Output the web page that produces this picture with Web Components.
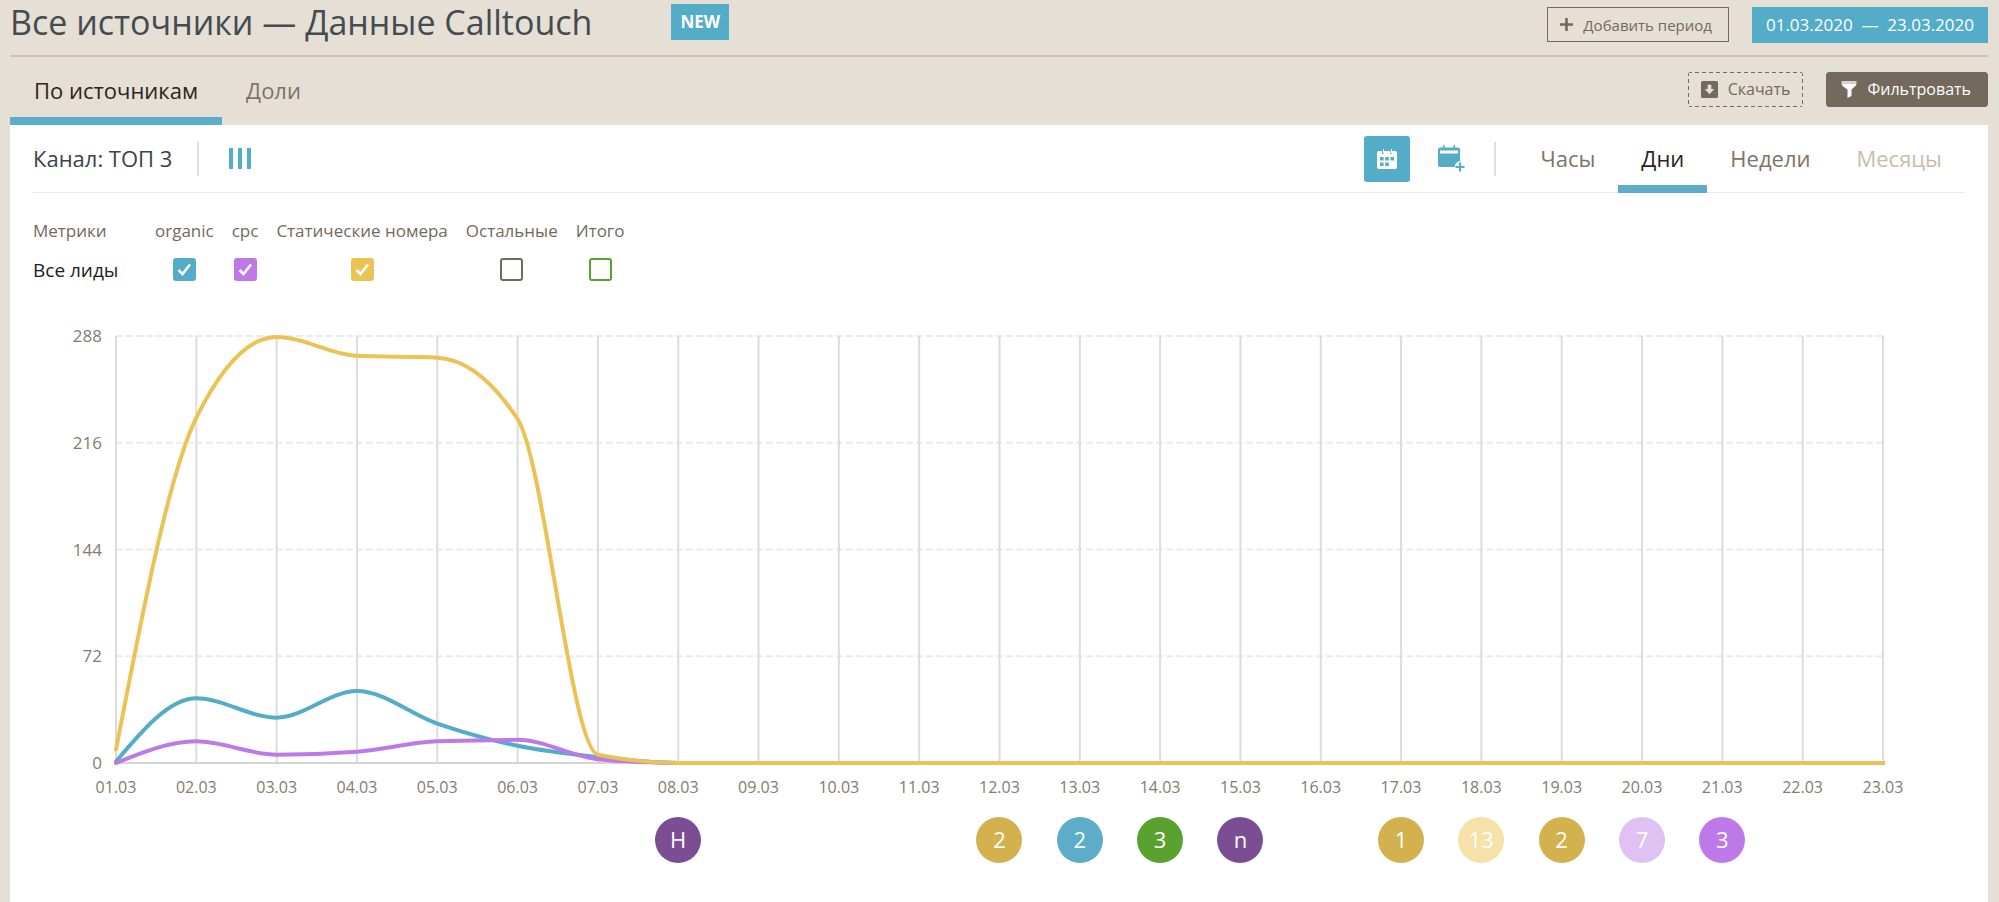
<!DOCTYPE html>
<html lang="ru">
<head>
<meta charset="utf-8">
<title>Все источники — Данные Calltouch</title>
<style>
html { background: #e6dfd6; }
body { margin: 0; min-height: 100vh; display: flex; font-family: "Open Sans", "Noto Sans", sans-serif; color: #3c4346; }
report-page { flex: 1; min-width: 0; }
</style>
</head>
<body>
<report-page></report-page>

<template id="t-page">
<style>
:host { display: flex; flex-direction: column; padding: 0 11px 0 10px; box-sizing: border-box; }
.panel { flex: 1; background: #fff; }
.group { display: flex; align-items: center; gap: 23px; }
.actions { margin-bottom: 4px; }
</style>
<report-header></report-header>
<tab-bar>
  <tab-link active>По источникам</tab-link>
  <tab-link>Доли</tab-link>
  <div class="group actions" slot="actions">
    <tool-button kind="dashed">
      <svg slot="icon" width="17" height="17" viewBox="0 0 16 16"><rect width="16" height="16" rx="1.500" fill="#73695c"/><path d="M6.300 3.500h3.400v4h2.800L8 12.500 3.500 7.500h2.800z" fill="#e6dfd6"/></svg>
      Скачать
    </tool-button>
    <tool-button kind="solid">
      <svg slot="icon" width="16" height="18" viewBox="0 0 16 18"><path d="M.5 1h15v2.500H.5z" fill="#d8d3cc"/><path d="M.5 3.500h15c0 2.300-2.600 4-5 6v6.500L6.500 18V9.500c-3-2-6-3.700-6-6z" fill="#fff"/></svg>
      Фильтровать
    </tool-button>
  </div>
</tab-bar>
<main class="panel">
  <chart-toolbar></chart-toolbar>
  <metric-table></metric-table>
  <line-chart></line-chart>
</main>
</template>

<template id="t-header">
<style>
:host { display: flex; justify-content: space-between; height: 55px; border-bottom: 2px solid #cdc3b3; }
.left { display: flex; align-items: center; gap: 79px; height: 44px; }
h1 { margin: 0; font-size: 34px; line-height: 44px; font-weight: 400; color: #454c4f; white-space: nowrap; }
.badge { background: #53adc9; color: #fff; font-size: 17px; font-weight: 700; line-height: 36px; padding: 0 9px; }
.right { display: flex; gap: 23px; align-items: flex-start; padding-top: 7px; }
</style>
<div class="left"><h1>Все источники — Данные Calltouch</h1><span class="badge">NEW</span></div>
<div class="right">
  <tool-button kind="outline">
    <svg slot="icon" width="13" height="13" viewBox="0 0 13 13"><path d="M6.500 0v13M0 6.500h13" stroke="#73695c" stroke-width="2.600"/></svg>
    Добавить период
  </tool-button>
  <tool-button kind="date">01.03.2020&nbsp; —&nbsp; 23.03.2020</tool-button>
</div>
</template>

<template id="t-button">
<style>
:host { display: block; }
button { display: flex; align-items: center; gap: 10px; height: 35px; padding: 0 12px; box-sizing: border-box; border: 1px solid #73695c; background: none; color: #73695c; font-family: inherit; font-size: 16px; line-height: 24px; white-space: nowrap; cursor: pointer; }
:host([kind=outline]) button { font-size: 15px; padding: 0 16px 0 12px; }
:host([kind=date]) button { height: 36px; border: 0; padding: 0 14px; background: #53adc9; color: #fff; font-size: 17px; }
:host([kind=dashed]) button {
  --h: repeating-linear-gradient(90deg, #73695c 0 4px, transparent 4px 7px);
  --v: repeating-linear-gradient(#73695c 0 4px, transparent 4px 7px);
  border: 0; border-radius: 3px; padding: 0 13px;
  background: var(--h) top / 100% 1px no-repeat, var(--h) bottom / 100% 1px no-repeat, var(--v) left / 1px 100% no-repeat, var(--v) right / 1px 100% no-repeat;
}
:host([kind=solid]) button { background: #73695c; color: #fff; border-radius: 3px; padding: 0 16px 0 14px; }
</style>
<button type="button"><slot name="icon"></slot><span><slot></slot></span></button>
</template>

<template id="t-tabs">
<style>
:host { display: flex; justify-content: space-between; align-items: center; height: 68px; }
nav { display: flex; height: 100%; }
</style>
<nav><slot></slot></nav><slot name="actions"></slot>
</template>

<template id="t-tab">
<style>
:host { display: flex; --ink: #7d7368; }
:host([active]) { --ink: #2b2620; }
:host([disabled]) { --ink: #c9bda9; }
a { display: flex; align-items: center; padding: 5px var(--tab-pad, 24px) 0; border-bottom: 8px solid transparent; color: var(--ink); font-size: 22px; line-height: 30px; text-decoration: none; white-space: nowrap; }
:host([active]) a { border-color: #5cadca; }
</style>
<a href="#"><slot></slot></a>
</template>

<template id="t-toolbar">
<style>
:host { display: flex; justify-content: space-between; height: 67px; margin: 0 23px; border-bottom: 1px solid #ebebeb; }
.side { display: flex; align-items: center; }
h2 { margin: 0; padding-bottom: 2px; font-size: 22px; line-height: 30px; font-weight: 400; color: #3c4346; }
.rule { width: 2px; height: 34px; background: #e0e0e0; }
button { display: flex; align-items: center; justify-content: center; width: 46px; height: 46px; padding: 0; border: 0; border-radius: 3px; background: none; cursor: pointer; }
.on { background: #53adc9; }
.columns { width: 66px; }
.extra { margin: 0 20px 0 18px; }
nav { --tab-pad: 23px; display: flex; align-self: stretch; margin-left: 21px; margin-bottom: -1px; }
h2 + .rule { margin: 0 8px 0 25px; }
</style>
<div class="side">
  <h2>Канал: ТОП 3</h2><span class="rule"></span>
  <button class="columns" type="button" aria-label="Столбцы"><svg width="22" height="21" viewBox="0 0 22 21"><path d="M0 0h4v21H0zM9 0h4v21H9zM18 0h4v21h-4z" fill="#53adc9"/></svg></button>
</div>
<div class="side">
  <button class="on" type="button" aria-label="Календарь"><svg width="20" height="20" viewBox="0 0 20 20"><path d="M2 2h3v3h1.500V2h7v3H15V2h3a2 2 0 0 1 2 2v14a2 2 0 0 1-2 2H2a2 2 0 0 1-2-2V4a2 2 0 0 1 2-2z" fill="#fff"/><path d="M6 0h1v4H6zM14 0h1v4h-1z" fill="#fff"/><path d="M3 8h3.600v3.500H3zM8.200 8h3.600v3.500H8.200zM13.400 8H17v3.500h-3.600zM3 13.500h3.600V17H3zM8.200 13.500h3.600V17H8.200z" fill="#53adc9"/></svg></button>
  <button class="extra" type="button" aria-label="Добавить дату"><svg width="27" height="27" viewBox="0 0 27 27"><path d="M2 2.500h18a2 2 0 0 1 2 2v11.500c-3 .5-5 2.500-5.500 6H2a2 2 0 0 1-2-2v-15.500a2 2 0 0 1 2-2z" fill="#53adc9"/><path d="M5 0h1.500v4H5zM15.500 0H17v4h-1.500z" fill="#53adc9"/><path d="M2 5.500h18v3H2z" fill="#fff"/><path d="M22 17.500v9M17.500 22h9" stroke="#53adc9" stroke-width="2.200"/></svg></button>
  <span class="rule"></span>
  <nav><tab-link>Часы</tab-link><tab-link active>Дни</tab-link><tab-link>Недели</tab-link><tab-link disabled>Месяцы</tab-link></nav>
</div>
</template>

<template id="t-metrics">
<style>
:host { display: block; margin: 18px 23px 0; }
table { border-collapse: collapse; }
th, td { height: 39px; padding: 0 9px; font-weight: 400; font-size: 17px; line-height: 24px; text-align: center; white-space: nowrap; color: #73695c; }
tr > :first-child { width: 104px; padding-left: 0; text-align: left; }
tbody th { font-size: 19px; color: #1c2226; }
input { appearance: none; display: block; width: 23px; height: 23px; margin: 0 auto; border: 2px solid var(--c); border-radius: 3px; box-sizing: border-box; background: #fff center / 15px 15px no-repeat; }
input:checked { background-color: var(--c); background-image: url("data:image/svg+xml,%3Csvg xmlns='http://www.w3.org/2000/svg' viewBox='0 0 15 15'%3E%3Cpath d='M1.500 8l4 4L13 2.500' fill='none' stroke='white' stroke-width='2.600'/%3E%3C/svg%3E"); }
</style>
<table>
<thead><tr><th scope="col">Метрики</th><th scope="col" id="m1">organic</th><th scope="col" id="m2">cpc</th><th scope="col" id="m3">Статические номера</th><th scope="col" id="m4">Остальные</th><th scope="col" id="m5">Итого</th></tr></thead>
<tbody><tr><th scope="row">Все лиды</th>
<td><input type="checkbox" checked aria-labelledby="m1" style="--c:#53adc9"></td>
<td><input type="checkbox" checked aria-labelledby="m2" style="--c:#bd79e8"></td>
<td><input type="checkbox" checked aria-labelledby="m3" style="--c:#ebc354"></td>
<td><input type="checkbox" aria-labelledby="m4" style="--c:#73695c"></td>
<td><input type="checkbox" aria-labelledby="m5" style="--c:#5aa22f"></td></tr></tbody>
</table>
</template>

<template id="t-chart">
<style>
:host { display: grid; grid-template-columns: 92px 1fr; column-gap: 14px; margin: 47px 105px 0 0; color: #857b6f; font-size: 16px; line-height: 24px; }
.y, .x { display: flex; justify-content: space-between; margin: 0; padding: 0; list-style: none; }
.y { flex-direction: column; text-align: right; font-size: 17px; }
.y li { height: 0; display: flex; align-items: center; justify-content: flex-end; }
svg { display: block; width: 100%; height: 427px; overflow: visible; }
svg * { vector-effect: non-scaling-stroke; fill: none; }
.x { grid-column: 2; margin-top: 12px; }
.x li { width: 0; display: flex; flex-direction: column; align-items: center; gap: 18px; white-space: nowrap; }
</style>
<ul class="y"></ul>
<svg viewBox="0 0 22 288" preserveAspectRatio="none" role="img" aria-label="График лидов по дням"></svg>
<ul class="x"></ul>
</template>

<template id="t-event">
<style>
:host { display: block; }
button { display: block; width: 46px; height: 46px; padding: 0 0 2px; border: 0; border-radius: 50%; background: var(--c); color: #fff; font-family: inherit; font-size: 22px; line-height: 44px; text-align: center; cursor: pointer; }
</style>
<button type="button"><slot></slot></button>
</template>

<script>
const define = (name, templateId, setup) => customElements.define(name, class extends HTMLElement {
  constructor() {
    super();
    const root = this.attachShadow({ mode: 'open' });
    root.append(document.getElementById(templateId).content.cloneNode(true));
    if (setup) setup(root);
  }
});

const DAYS = 23, MAX = 288;
const SERIES = [
  { color: '#53adc9', values: [1, 43.6, 30.6, 48.6, 26.6, 11.6, 4] },
  { color: '#bd79e8', values: [0, 14.6, 5.6, 7.6, 14.6, 15.6, 2.6] },
  { color: '#ebc354', values: [9, 233, 287.4, 274.6, 273.4, 232, 5.6] },
];
const EVENTS = {
  8: ['Н', '#7b4e94'], 12: ['2', '#d3b14e'], 13: ['2', '#5cadca'], 14: ['3', '#5aa22f'], 15: ['n', '#7b4e94'],
  17: ['1', '#d3b14e'], 18: ['13', '#f6e1a9'], 19: ['2', '#d3b14e'], 20: ['7', '#e0c1f3'], 21: ['3', '#bd79e8'],
};

// Monotone cubic interpolation with unit spacing between days.
function curve(values) {
  const v = Array.from({ length: DAYS }, (_, i) => values[i] || 0);
  const d = v.slice(1).map((n, i) => n - v[i]);
  const m = v.map((_, i) => {
    if (i === 0 || i === DAYS - 1) return 0;
    const a = d[i - 1], b = d[i];
    return (Math.sign(a) + Math.sign(b)) * Math.min(Math.abs(a), Math.abs(b), Math.abs(a + b) / 4);
  });
  m[0] = (3 * d[0] - m[1]) / 2;
  let path = `M0 ${MAX - v[0]}`;
  for (let i = 0; i < DAYS - 1; i++) {
    path += `C${i + 1 / 3} ${MAX - v[i] - m[i] / 3} ${i + 2 / 3} ${MAX - v[i + 1] + m[i + 1] / 3} ${i + 1} ${MAX - v[i + 1]}`;
  }
  return path;
}

function drawChart(root) {
  const ticks = [288, 216, 144, 72, 0];
  root.querySelector('.y').innerHTML = ticks.map(t => `<li>${t}</li>`).join('');
  let svg = '';
  for (const t of ticks.slice(0, 4)) svg += `<path d="M0 ${MAX - t}H22" stroke="#ebebeb" stroke-width="2" stroke-dasharray="7 3"/>`;
  for (let i = 0; i < DAYS; i++) svg += `<path d="M${i} 0V288" stroke="#dcdcdc" stroke-width="2"/>`;
  svg += '<path d="M0 288H22" stroke="#d4d4d4" stroke-width="2"/>';
  for (const s of SERIES) svg += `<path d="${curve(s.values)}" stroke="${s.color}" stroke-width="4" stroke-linecap="round"/>`;
  root.querySelector('svg').innerHTML = svg;
  root.querySelector('.x').innerHTML = Array.from({ length: DAYS }, (_, i) => {
    const day = i + 1, e = EVENTS[day];
    return `<li><span>${String(day).padStart(2, '0')}.03</span>${e ? `<event-mark style="--c:${e[1]}">${e[0]}</event-mark>` : ''}</li>`;
  }).join('');
}

define('tool-button', 't-button');
define('tab-link', 't-tab');
define('tab-bar', 't-tabs');
define('event-mark', 't-event');
define('report-header', 't-header');
define('chart-toolbar', 't-toolbar');
define('metric-table', 't-metrics');
define('line-chart', 't-chart', drawChart);
define('report-page', 't-page');
</script>
</body>
</html>
